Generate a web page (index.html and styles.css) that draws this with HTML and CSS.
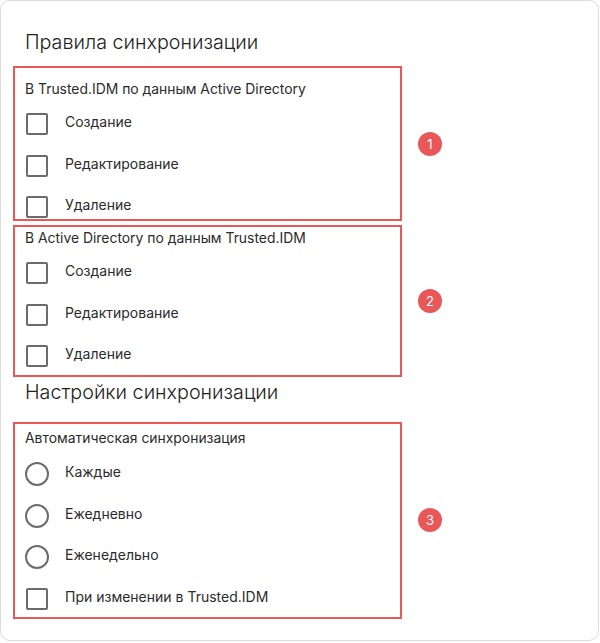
FILE: index.html
```html
<!DOCTYPE html>
<html lang="ru">
<head>
<meta charset="utf-8">
<link rel="stylesheet" href="styles.css">
</head>
<body>
<div class="card">
  <h2 class="heading heading-first">Правила синхронизации</h2>

  <div class="group group-1">
    <div class="box box-1">
      <div class="subtitle">В Trusted.IDM по данным Active Directory</div>
      <div class="rows">
        <div class="row"><span class="ctl check"></span><span class="label">Создание</span></div>
        <div class="row"><span class="ctl check"></span><span class="label">Редактирование</span></div>
        <div class="row"><span class="ctl check"></span><span class="label">Удаление</span></div>
      </div>
    </div>
    <span class="badge">1</span>
  </div>

  <div class="group group-2">
    <div class="box box-2">
      <div class="subtitle">В Active Directory по данным Trusted.IDM</div>
      <div class="rows">
        <div class="row"><span class="ctl check"></span><span class="label">Создание</span></div>
        <div class="row"><span class="ctl check"></span><span class="label">Редактирование</span></div>
        <div class="row"><span class="ctl check"></span><span class="label">Удаление</span></div>
      </div>
    </div>
    <span class="badge">2</span>
  </div>

  <h2 class="heading heading-second">Настройки синхронизации</h2>

  <div class="group group-3">
    <div class="box box-3">
      <div class="subtitle">Автоматическая синхронизация</div>
      <div class="rows">
        <div class="row"><span class="ctl radio"></span><span class="label">Каждые</span></div>
        <div class="row"><span class="ctl radio"></span><span class="label">Ежедневно</span></div>
        <div class="row"><span class="ctl radio"></span><span class="label">Еженедельно</span></div>
        <div class="row"><span class="ctl check"></span><span class="label">При изменении в Trusted.IDM</span></div>
      </div>
    </div>
    <span class="badge">3</span>
  </div>
</div>
</body>
</html>
```

FILE: styles.css
```css
* { box-sizing: border-box; }

html, body {
  margin: 0;
  padding: 0;
  background: #ffffff;
}

body {
  font-family: Inter, "Noto Sans", "DejaVu Sans", sans-serif;
  color: #2b2b2b;
  width: 600px;
  height: 643px;
}

.card {
  width: 599px;
  height: 641px;
  border: 1px solid #dcdcdc;
  border-radius: 10px;
  padding: 0 0 0 12px;
  display: flex;
  flex-direction: column;
  align-items: flex-start;
}

.heading {
  margin: 0;
  padding-left: 12px;
  font-size: 19.7px;
  font-weight: 300;
  line-height: 28px;
  color: #222222;
}

.heading-first { margin-top: 27px; }
.heading-second { margin-top: 1px; }

.group {
  display: flex;
  align-items: center;
}

.group-1 { margin-top: 10px; }
.group-2 { margin-top: 4px; }
.group-3 { margin-top: 16px; }

.box {
  width: 389px;
  border: 2px solid #e85858;
  display: flex;
  flex-direction: column;
  padding-left: 10px;
}

.box-1 { padding-top: 11px; padding-bottom: 2px; }
.box-2 { padding-top: 1px; padding-bottom: 9px; }
.box-3 { padding-top: 4px; padding-bottom: 7.5px; }

.subtitle {
  font-size: 13.9px;
  line-height: 20px;
  color: #2b2b2b;
}

.rows {
  display: flex;
  flex-direction: column;
  gap: 17.5px;
  margin-top: 11px;
}

.box-2 .rows { margin-top: 11px; }
.box-3 .rows { margin-top: 12px; gap: 17.7px; }

.row {
  display: flex;
  align-items: center;
  height: 24px;
}

.ctl {
  width: 24px;
  height: 24px;
  display: flex;
  align-items: center;
  justify-content: center;
  flex: none;
  position: relative;
  top: 2px;
}

.check::before {
  content: "";
  width: 18px;
  height: 18px;
  border: 2px solid #6b6b6b;
  border-radius: 2px;
}

.radio::before {
  content: "";
  width: 20px;
  height: 20px;
  border: 2px solid #6b6b6b;
  border-radius: 50%;
}

.label {
  margin-left: 16px;
  font-size: 14px;
  line-height: 20px;
  color: #2b2b2b;
}

.badge {
  margin-left: 16px;
  width: 24px;
  height: 24px;
  border-radius: 50%;
  background: #e85858;
  color: #ffffff;
  font-size: 13px;
  line-height: 24px;
  text-align: center;
}
```
